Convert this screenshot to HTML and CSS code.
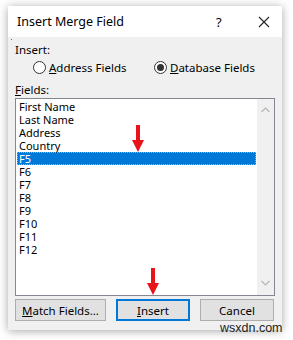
FILE: index.html
```html
<!DOCTYPE html>
<html lang="en">
<head>
    <meta charset="UTF-8">
    <title>Insert Merge Field</title>
    <link rel="stylesheet" href="styles.css">
</head>
<body>
    <div class="dialog">
        <div class="titlebar">
            <div class="title">Insert Merge Field</div>
            <div class="help">?</div>
            <div class="close">
                <svg width="12" height="12" viewBox="0 0 12 12"><path d="M1 1L11 11M11 1L1 11" stroke="#222" stroke-width="1.1" fill="none"/></svg>
            </div>
        </div>
        <div class="body">
            <div class="dot"></div>
            <div class="label">Insert:</div>
            <div class="radios">
                <label class="radio"><span class="circle"></span><span><u>A</u>ddress Fields</span></label>
                <label class="radio checked"><span class="circle"></span><span><u>D</u>atabase Fields</span></label>
            </div>
            <div class="label"><u>F</u>ields:</div>
            <div class="listbox">
                <div class="items">
                    <div class="item">First Name</div>
                    <div class="item">Last Name</div>
                    <div class="item">Address</div>
                    <div class="item">Country</div>
                    <div class="item selected">F5</div>
                    <div class="item">F6</div>
                    <div class="item">F7</div>
                    <div class="item">F8</div>
                    <div class="item">F9</div>
                    <div class="item">F10</div>
                    <div class="item">F11</div>
                    <div class="item">F12</div>
                </div>
                <div class="scrollbar">
                    <svg width="9" height="6" viewBox="0 0 9 6"><path d="M0.5 5L4.5 1L8.5 5" stroke="#b5b5b5" stroke-width="1.2" fill="none"/></svg>
                    <svg width="9" height="6" viewBox="0 0 9 6"><path d="M0.5 1L4.5 5L8.5 1" stroke="#b5b5b5" stroke-width="1.2" fill="none"/></svg>
                </div>
            </div>
            <div class="buttons">
                <button class="btn wide"><u>M</u>atch Fields...</button>
                <button class="btn default"><u>I</u>nsert</button>
                <button class="btn">Cancel</button>
            </div>
        </div>
    </div>

    <svg class="arrow arrow-list" width="14" height="28" viewBox="0 0 14 28"><path d="M5 0H9V15H13L7 27L1 15H5Z" fill="#e8141a"/></svg>
    <svg class="arrow arrow-btn" width="14" height="28" viewBox="0 0 14 28"><path d="M5 0H9V15H13L7 27L1 15H5Z" fill="#e8141a"/></svg>
    <div class="watermark">wsxdn.com</div>
</body>
</html>
```

FILE: styles.css
```css
body {
    margin: 0;
    padding: 0;
    width: 293px;
    height: 340px;
    background: #fff;
    font-family: "Noto Sans", "Open Sans", Arial, sans-serif;
    color: #000;
    position: relative;
    overflow: hidden;
}

.dialog {
    margin: 6px 0 0 8px;
    width: 274px;
    background: #f0f0f0;
    box-shadow: 0 1px 9px rgba(0, 0, 0, 0.35);
}

.titlebar {
    display: flex;
    align-items: center;
    height: 31px;
    background: #fff;
    font-size: 12.5px;
}

.title {
    flex: 1;
    padding-left: 9px;
}

.help {
    width: 12px;
    margin-right: 30px;
    font-size: 13px;
}

.close {
    display: flex;
    width: 24px;
}

.body {
    position: relative;
    padding: 6px 7px 9px 7px;
    font-size: 11.5px;
}

.dot {
    position: absolute;
    left: 3px;
    top: 2px;
    width: 1px;
    height: 1px;
    background: #666;
}

.label {
    line-height: 14px;
    height: 14px;
}

.radios {
    display: flex;
    height: 20px;
    align-items: center;
    padding-left: 18px;
    margin-bottom: 6px;
}

.radio {
    display: flex;
    align-items: center;
    gap: 3px;
    width: 122px;
}

.circle {
    width: 11px;
    height: 11px;
    border: 1px solid #333;
    border-radius: 50%;
    background: #fff;
    display: flex;
    align-items: center;
    justify-content: center;
}

.radio.checked .circle::after {
    content: "";
    width: 7px;
    height: 7px;
    border-radius: 50%;
    background: #333;
}

.listbox {
    display: flex;
    height: 196px;
    margin-top: 1px;
    border: 1px solid #828790;
    background: #fff;
}

.items {
    flex: 1;
    padding: 1px 1px;
}

.item {
    height: 13px;
    line-height: 13px;
    font-size: 11px;
    padding-left: 2px;
}

.item.selected {
    background: #0078d7;
    color: #fff;
    outline: 1px dotted #8ab8e4;
    outline-offset: -1px;
}

.scrollbar {
    width: 17px;
    background: #f0f0f0;
    display: flex;
    flex-direction: column;
    justify-content: space-between;
    align-items: center;
    padding: 8px 0 9px 0;
}

.buttons {
    display: flex;
    gap: 10px;
    margin-top: 3px;
}

.btn {
    width: 74px;
    height: 22px;
    padding: 0;
    border: 1px solid #adadad;
    background: #e1e1e1;
    font-family: inherit;
    font-size: 11.5px;
    color: #000;
}

.btn.wide {
    width: 91px;
}

.btn.default {
    border: 2px solid #0078d7;
}

.arrow {
    position: absolute;
}

.arrow-list {
    left: 131px;
    top: 125px;
}

.arrow-btn {
    left: 146px;
    top: 268px;
}

.watermark {
    position: absolute;
    left: 220px;
    top: 321px;
    font-size: 12.5px;
    color: #222;
    font-family: "Liberation Sans", Arial, sans-serif;
}
```
